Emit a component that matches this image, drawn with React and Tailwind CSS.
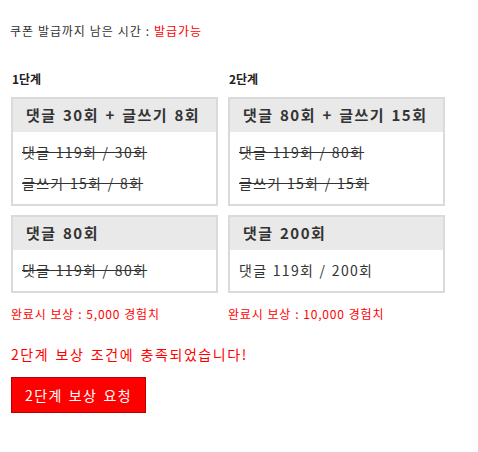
const font = { fontFamily: '"Noto Sans CJK KR", "Noto Sans", sans-serif' }

const steps = [
  {
    label: '1단계',
    missions: [
      {
        title: '댓글 30회 + 글쓰기 8회',
        rows: [
          { text: '댓글 119회 / 30회', done: true },
          { text: '글쓰기 15회 / 8회', done: true },
        ],
      },
      {
        title: '댓글 80회',
        rows: [{ text: '댓글 119회 / 80회', done: true }],
      },
    ],
    reward: '완료시 보상 : 5,000 경험치',
  },
  {
    label: '2단계',
    missions: [
      {
        title: '댓글 80회 + 글쓰기 15회',
        rows: [
          { text: '댓글 119회 / 80회', done: true },
          { text: '글쓰기 15회 / 15회', done: true },
        ],
      },
      {
        title: '댓글 200회',
        rows: [{ text: '댓글 119회 / 200회', done: false }],
      },
    ],
    reward: '완료시 보상 : 10,000 경험치',
  },
]

function MissionBox({ mission }) {
  return (
    <div className="border-2 border-[#dadada] bg-white">
      <div className="h-[33px] bg-[#e9e9e9] px-[13px] flex items-center whitespace-nowrap
        text-[15px] font-bold text-[#333] tracking-[1.5px] [word-spacing:1.5px]">
        {mission.title}
      </div>
      <div className="px-[9px] py-[5px]">
        {mission.rows.map(r => (
          <div key={r.text}
            className={`h-[31px] flex items-center whitespace-nowrap text-[14px] text-[#333]
              tracking-[1.3px] [word-spacing:1px]
              ${r.done ? 'line-through' : ''}`}>
            {r.text}
          </div>
        ))}
      </div>
    </div>
  )
}

export default function App() {
  return (
    <div style={font} className="w-[478px] h-[452px] bg-white px-[11px] pt-[22px]">
      <p className="text-[12px] text-[#333] -ml-px tracking-[0.9px] [word-spacing:0.5px]">
        쿠폰 발급까지 남은 시간 : <span className="text-[#ff0000]">발급가능</span>
      </p>

      <div className="mt-[30px] grid grid-cols-[207px_217px] gap-x-[10px]">
        {steps.map(s => (
          <div key={s.label}>
            <h3 className="text-[12px] font-bold text-[#222] h-[18px] leading-[18px] pl-px">
              {s.label}
            </h3>
            <div className="mt-[9px] flex flex-col gap-[9px]">
              {s.missions.map(m => (
                <MissionBox key={m.title} mission={m} />
              ))}
            </div>
            <p className="mt-[12px] text-[12px] text-[#ff0000] tracking-[0.8px] [word-spacing:0.5px]">
              {s.reward}
            </p>
          </div>
        ))}
      </div>

      <p className="mt-[21px] text-[14px] text-[#ff0000] tracking-[1.6px] [word-spacing:1.5px]">
        2단계 보상 조건에 충족되었습니다!
      </p>
      <button className="mt-[12px] w-[135px] h-[36px] bg-[#ff0000]
        border border-[#b80000] text-white text-[14px] tracking-[1.4px] [word-spacing:1.5px]">
        2단계 보상 요청
      </button>
    </div>
  )
}
